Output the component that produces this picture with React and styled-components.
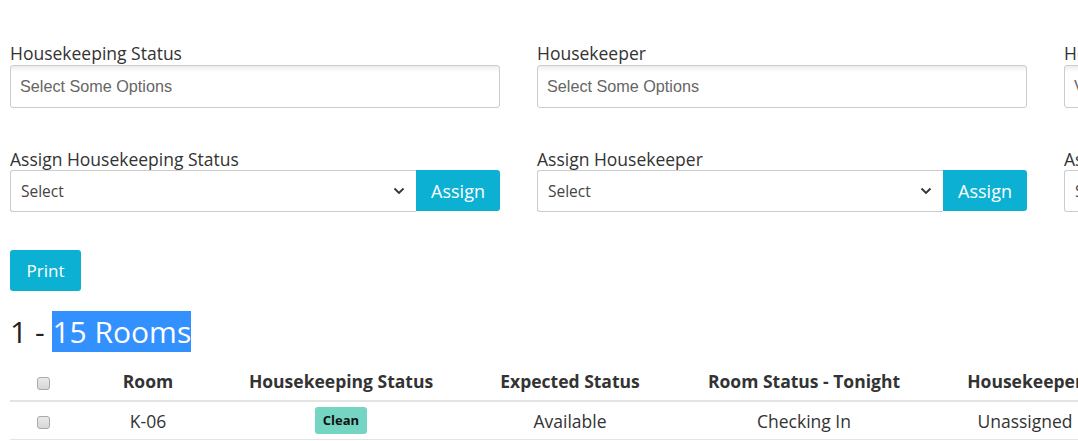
import React from "react";
import styled, { createGlobalStyle } from "styled-components";

const GlobalStyle = createGlobalStyle`
  html, body {
    margin: 0;
    background: #fff;
    overflow: hidden;
  }
  body {
    font-family: "Open Sans", "Liberation Sans", sans-serif;
    color: #333;
  }
`;

const Page = styled.div`
  width: 1300px;
  padding: 42px 0 0 10px;
`;

const FilterGrid = styled.div`
  display: grid;
  grid-template-columns: repeat(3, 490px);
  column-gap: 37px;
  row-gap: 40px;
`;

const Field = styled.div`
  display: flex;
  flex-direction: column;
`;

const Label = styled.label`
  font-size: 17.5px;
  line-height: 22px;
  color: #333;
  margin-bottom: ${(p) => (p.$tight ? "0" : "1px")};
  white-space: nowrap;
`;

const MultiBox = styled.div`
  height: 43px;
  box-sizing: border-box;
  border: 1px solid #ccc;
  border-radius: 3px;
  background: linear-gradient(#eee 1%, #fff 15%);
  display: flex;
  align-items: center;
  padding-left: 9px;
  font-family: "Liberation Sans", Arial, sans-serif;
  font-size: 16.2px;
  color: #666;
`;

const AssignRow = styled.div`
  display: flex;
  height: 42px;
`;

const SelectBox = styled.div`
  flex: 1;
  box-sizing: border-box;
  border: 1px solid #ccc;
  border-right: none;
  border-radius: 3px 0 0 3px;
  display: flex;
  align-items: center;
  justify-content: space-between;
  padding: 0 11px 0 10px;
  font-size: 15.5px;
  color: #444;
`;

const Button = styled.button`
  border: none;
  background: #0cb0d3;
  color: #fff;
  font-family: "Open Sans", sans-serif;
  font-size: ${(p) => p.$size || "18px"};
  border-radius: ${(p) => p.$radius || "3px"};
  padding: 0;
  cursor: pointer;
`;

const AssignButton = styled(Button)`
  width: 84px;
  height: 41px;
`;

const PrintButton = styled(Button)`
  width: 71px;
  height: 41px;
  margin-top: 38px;
  display: block;
`;

const Heading = styled.h2`
  margin: 21px 0 10px;
  font-weight: 400;
  font-size: 30px;
  line-height: 40px;
  color: #222;
`;

const Highlight = styled.span`
  background: #3390ff;
  color: #fff;
`;

const Table = styled.table`
  border-collapse: collapse;
  table-layout: fixed;
  width: ${(p) => p.$w}px;
`;

const Th = styled.th`
  width: ${(p) => p.$w}px;
  font-size: 17.5px;
  font-weight: 700;
  color: #333;
  text-align: center;
  padding: 8px 0;
  line-height: 22px;
  border-bottom: 2px solid #e4e4e4;
  white-space: nowrap;
`;

const Td = styled.td`
  font-size: 17.5px;
  color: #333;
  text-align: center;
  height: 37px;
  padding: 0;
  line-height: 22px;
  border-bottom: 1px solid #e4e4e4;
  white-space: nowrap;
`;

const Check = styled.span`
  display: inline-block;
  width: 13px;
  height: 13px;
  box-sizing: border-box;
  border: 1px solid #a9a9a9;
  border-radius: 3px;
  background: linear-gradient(#eaeaea, #d6d6d6);
  vertical-align: middle;
`;

const Badge = styled.span`
  display: inline-block;
  background: #74d6c2;
  color: #111;
  font-size: 13px;
  font-weight: 700;
  line-height: 27px;
  padding: 0 8px;
  border-radius: 3px;
  vertical-align: middle;
`;

const Chevron = () => (
  <svg width="12" height="8" viewBox="0 0 12 8">
    <path d="M1.5 1.5 L6 6 L10.5 1.5" fill="none" stroke="#333" strokeWidth="1.8" />
  </svg>
);

const filters = [
  { label: "Housekeeping Status", placeholder: "Select Some Options" },
  { label: "Housekeeper", placeholder: "Select Some Options" },
  { label: "Hotel Floor", placeholder: "View All" },
];

const assigns = [
  "Assign Housekeeping Status",
  "Assign Housekeeper",
  "Assign Notes",
];

const columns = [
  { title: "", w: 66 },
  { title: "Room", w: 144 },
  { title: "Housekeeping Status", w: 242 },
  { title: "Expected Status", w: 216 },
  { title: "Room Status - Tonight", w: 252 },
  { title: "Housekeeper", w: 190 },
];

const tableWidth = columns.reduce((sum, c) => sum + c.w, 0);

const App = () => {
  return (
    <Page>
      <GlobalStyle />
      <FilterGrid>
        {filters.map((f) => (
          <Field key={f.label}>
            <Label>{f.label}</Label>
            <MultiBox>{f.placeholder}</MultiBox>
          </Field>
        ))}
        {assigns.map((a) => (
          <Field key={a}>
            <Label $tight>{a}</Label>
            <AssignRow>
              <SelectBox>
                <span>Select</span>
                <Chevron />
              </SelectBox>
              <AssignButton $radius="0 3px 3px 0">Assign</AssignButton>
            </AssignRow>
          </Field>
        ))}
      </FilterGrid>

      <PrintButton $size="17px">Print</PrintButton>

      <Heading>
        1 - <Highlight>15 Rooms</Highlight>
      </Heading>

      <Table $w={tableWidth}>
        <thead>
          <tr>
            {columns.map((c, i) => (
              <Th key={i} $w={c.w}>
                {i === 0 ? <Check /> : c.title}
              </Th>
            ))}
          </tr>
        </thead>
        <tbody>
          <tr>
            <Td><Check /></Td>
            <Td>K-06</Td>
            <Td><Badge>Clean</Badge></Td>
            <Td>Available</Td>
            <Td>Checking In</Td>
            <Td>Unassigned</Td>
          </tr>
        </tbody>
      </Table>
    </Page>
  );
};

export default App;
